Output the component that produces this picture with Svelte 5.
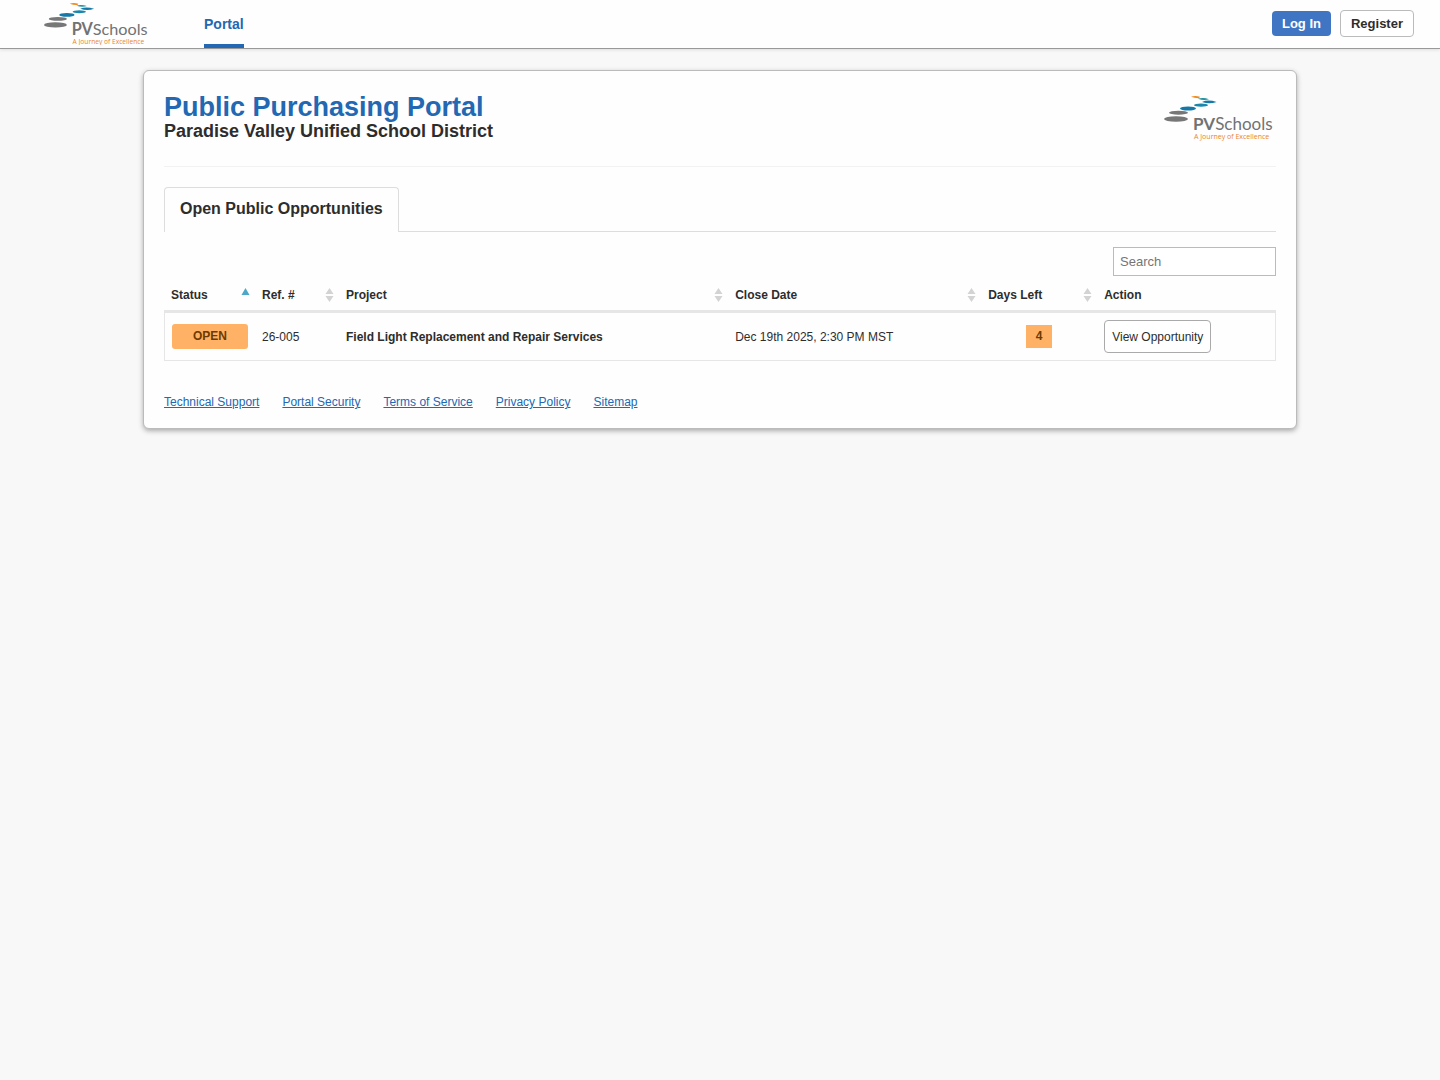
<script>
  const columns = [
    { key: 'status', label: 'Status', sort: 'asc' },
    { key: 'ref', label: 'Ref. #', sort: 'both' },
    { key: 'project', label: 'Project', sort: 'both' },
    { key: 'close', label: 'Close Date', sort: 'both' },
    { key: 'days', label: 'Days Left', sort: 'both' },
    { key: 'action', label: 'Action', sort: null }
  ];
  const rows = [
    {
      status: 'OPEN',
      ref: '26-005',
      project: 'Field Light Replacement and Repair Services',
      close: 'Dec 19th 2025, 2:30 PM MST',
      days: 4
    }
  ];
  const links = ['Technical Support', 'Portal Security', 'Terms of Service', 'Privacy Policy', 'Sitemap'];
  let query = $state('');
  const visible = $derived(rows.filter((r) => r.project.toLowerCase().includes(query.toLowerCase())));
</script>

{#snippet logo()}
  <svg viewBox="0 0 109 45" role="img" aria-label="PVSchools, A Journey of Excellence">
    <path d="M27 .8q4-1.600 9 0l-1 1.400q-4 .2-8-1.400z" fill="#f08a1d" />
    <path d="M34 2.800q5-1.800 11 .4-5 1.800-11-.4z" fill="#1c8f9d" />
    <path d="M38 6q6-2.800 14.500 0-7 2.600-14.500 0z" fill="#1479a8" />
    <ellipse cx="37" cy="9.200" rx="7" ry="1.600" fill="#1b87ad" />
    <ellipse cx="24" cy="12.500" rx="8" ry="2" fill="#1479a8" />
    <ellipse cx="14.500" cy="16.700" rx="9.500" ry="2" fill="#777" />
    <ellipse cx="12" cy="23" rx="12" ry="2.800" fill="#777" />
    <text class="name" x="29" y="34"><tspan class="strong">PV</tspan>Schools</text>
    <text class="tagline" x="30" y="43">A Journey of Excellence</text>
  </svg>
{/snippet}

<header class="topbar">
  <a class="brand" href="#home">{@render logo()}</a>
  <nav><a href="#portal">Portal</a></nav>
  <div class="account">
    <button class="login" type="button">Log In</button>
    <button class="register" type="button">Register</button>
  </div>
</header>

<main class="card">
  <div class="heading">
    <div>
      <h1>Public Purchasing Portal</h1>
      <h2>Paradise Valley Unified School District</h2>
    </div>
    <div class="district">{@render logo()}</div>
  </div>

  <div class="tabs" role="tablist">
    <button class="tab" type="button" role="tab" aria-selected="true">Open Public Opportunities</button>
  </div>

  <div class="filter">
    <input type="search" placeholder="Search" aria-label="Search" bind:value={query} />
  </div>

  <table>
    <thead>
      <tr>
        {#each columns as c}
          <th class={c.key} scope="col">
            <div class="head">
              <span>{c.label}</span>
              {#if c.sort}
                <svg class="sort" viewBox="0 0 9 14" aria-hidden="true">
                  {#if c.sort === 'asc'}
                    <path d="M.5 7 4.500 0l4 7z" fill="#4aa9c9" />
                  {:else}
                    <path d="M.5 6 4.500 0l4 6zM.5 8h8l-4 6z" fill="#d3d3d3" />
                  {/if}
                </svg>
              {/if}
            </div>
          </th>
        {/each}
      </tr>
    </thead>
    <tbody>
      {#each visible as r}
        <tr>
          <td><span class="badge">{r.status}</span></td>
          <td>{r.ref}</td>
          <td><strong>{r.project}</strong></td>
          <td>{r.close}</td>
          <td class="center"><span class="count">{r.days}</span></td>
          <td><button class="view" type="button">View Opportunity</button></td>
        </tr>
      {/each}
    </tbody>
  </table>

  <footer>
    {#each links as l}
      <a href="#{l.toLowerCase().replaceAll(' ', '-')}">{l}</a>
    {/each}
  </footer>
</main>

<style>
  :global(body) {
    background: #f8f8f8;
    color: #2d2d2d;
    font-family: 'Liberation Sans', Arial, sans-serif;
    font-size: 12px;
  }
  button,
  input {
    font-family: inherit;
    color: inherit;
    box-sizing: border-box;
  }
  button {
    cursor: pointer;
  }
  .topbar {
    display: flex;
    align-items: center;
    height: 48px;
    padding: 0 26px 0 44px;
    background: #fefefe;
    border-bottom: 1px solid #999;
    box-shadow: 0 1px 3px #ddd;
  }
  .brand {
    display: block;
    width: 104px;
    line-height: 0;
  }
  .name {
    font: 17px Lato, sans-serif;
    fill: #717274;
  }
  .strong {
    font-weight: 700;
  }
  .tagline {
    font: 7px 'Open Sans', sans-serif;
    fill: #e8862c;
  }
  nav {
    align-self: stretch;
    flex: 1;
    display: flex;
    margin-left: 56px;
  }
  nav a {
    box-sizing: border-box;
    height: 48px;
    border-bottom: 4px solid #2268b2;
    color: #2268b2;
    font-size: 14px;
    font-weight: 700;
    line-height: 48px;
    text-decoration: none;
  }
  .account {
    display: flex;
    align-items: center;
    gap: 9px;
    padding-bottom: 2px;
  }
  .login,
  .register {
    padding: 0 10px;
    border-radius: 4px;
    font-size: 13px;
    font-weight: 700;
  }
  .login {
    height: 25px;
    border: 0;
    background: #4075c4;
    color: #fff;
  }
  .register {
    height: 27px;
    border: 1px solid #bbb;
    background: #fff;
  }
  .card {
    box-sizing: border-box;
    width: calc(80% + 2px);
    margin: 21px auto;
    padding: 20px 20px 19px;
    background: #fefefe;
    border: 1px solid #bbb;
    border-radius: 6px;
    box-shadow: 0 2px 5px #aaa;
  }
  .heading {
    display: flex;
    justify-content: space-between;
    height: 75px;
    padding-right: 3px;
    border-bottom: 1px solid #f2f2f2;
  }
  h1,
  h2 {
    margin: 0;
  }
  h1 {
    padding-top: 1px;
    color: #2268b2;
    font-size: 27px;
    line-height: 30px;
  }
  h2 {
    font-size: 18px;
    line-height: 19px;
  }
  .district {
    width: 109px;
    padding-top: 5px;
  }
  svg {
    display: block;
  }
  .tabs {
    display: flex;
    margin-top: 20px;
    border-bottom: 1px solid #ddd;
  }
  .tab {
    height: 45px;
    margin-bottom: -1px;
    padding: 0 15px 2px;
    border: 1px solid #ddd;
    border-bottom: 0;
    border-radius: 4px 4px 0 0;
    background: #fefefe;
    font-size: 16px;
    font-weight: 700;
  }
  .filter {
    display: flex;
    justify-content: flex-end;
    padding-top: 15px;
  }
  input {
    width: 163px;
    height: 29px;
    padding: 0 6px;
    border: 1px solid #bbb;
    background: #fff;
    font-size: 13px;
    appearance: none;
  }
  input::placeholder {
    color: #757575;
  }
  table {
    width: 100%;
    table-layout: fixed;
    border-collapse: separate;
    border-spacing: 0;
  }
  th {
    height: 34px;
    padding: 0 5px 0 7px;
    border-bottom: 3px solid #e6e6e6;
    font-size: 12px;
    text-align: left;
  }
  th.status {
    width: 79px;
  }
  th.ref {
    width: 72px;
  }
  th.project {
    width: 35%;
    box-sizing: border-box;
  }
  th.close {
    width: 241px;
  }
  th.days {
    width: 104px;
  }
  .head {
    display: flex;
    align-items: center;
    justify-content: space-between;
    padding-top: 4px;
  }
  .sort {
    width: 9px;
    height: 14px;
  }
  td {
    height: 47px;
    padding: 0 7px;
    border-bottom: 1px solid #e6e6e6;
    font-size: 12px;
  }
  td:first-child {
    border-left: 1px solid #e6e6e6;
  }
  td:last-child {
    border-right: 1px solid #e6e6e6;
  }
  .badge {
    display: block;
    border-radius: 3px;
    background: #ffb266;
    color: #6b3b00;
    font-weight: 700;
    line-height: 25px;
    text-align: center;
  }
  .center {
    text-align: center;
  }
  .count {
    display: inline-block;
    width: 26px;
    background: #ffb266;
    color: #6b3b00;
    font-weight: 700;
    line-height: 23px;
  }
  .view {
    height: 33px;
    padding: 0 7px;
    border: 1px solid #aaa;
    border-radius: 4px;
    background: #fff;
    font-size: 12px;
  }
  footer {
    display: flex;
    gap: 23px;
    padding-top: 34px;
    font-size: 12px;
    line-height: 14px;
  }
  footer a {
    color: #2268b2;
  }
</style>
